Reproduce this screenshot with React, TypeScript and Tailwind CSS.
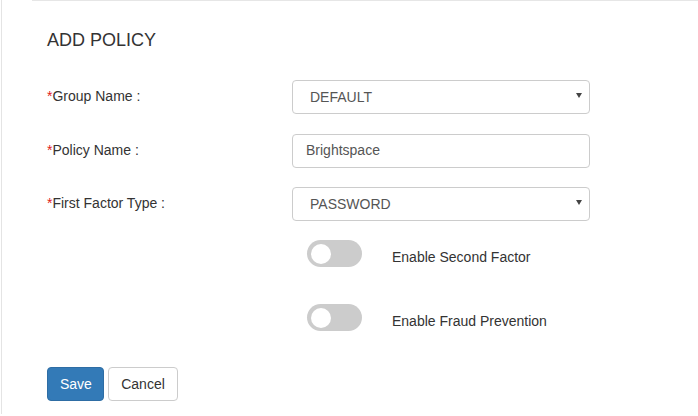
import { useState } from 'react';

function Toggle({ label }: { label: string }) {
  const [on, setOn] = useState(false);
  return (
    <div className="flex items-center h-[27px]">
      <div className="w-[260px] shrink-0" />
      <button
        onClick={() => setOn(!on)}
        className={`relative w-[55px] h-[27px] rounded-full ${on ? 'bg-[#337ab7]' : 'bg-[#ccc]'}`}
      >
        <span
          className={`absolute top-[3.5px] w-[20px] h-[20px] rounded-full bg-white ${on ? 'left-[31px]' : 'left-[4px]'}`}
        />
      </button>
      <span className="ml-[30px] mt-[7px] text-[14px] text-[#333]">{label}</span>
    </div>
  );
}

function Field({ label, children }: { label: string; children: React.ReactNode }) {
  return (
    <div className="flex items-center h-[34px]">
      <label className="w-[245px] shrink-0 text-[14px] text-[#333] -mt-[1px]">
        <span className="text-[#e02020]">*</span>
        {label}
      </label>
      <div className="w-[298px]">{children}</div>
    </div>
  );
}

function Select({ value }: { value: string }) {
  return (
    <div className="relative h-[34px] border border-[#ccc] rounded-[4px] bg-white flex items-center pl-[17px]">
      <span className="text-[14px] text-[#555]">{value}</span>
      <svg className="absolute right-[7px] top-[12px]" width="6" height="5" viewBox="0 0 6 5">
        <path d="M0 0H6L3 5Z" fill="#444" />
      </svg>
    </div>
  );
}

export default function App() {
  return (
    <div
      className="w-[698px] h-[416px] bg-white overflow-hidden"
      style={{ fontFamily: '"Liberation Sans", Arial, sans-serif' }}
    >
      <div className="flex h-full">
        <div className="w-px shrink-0" />
        <div className="w-px shrink-0 bg-[#e4e4e4] mb-[2px]" />
        <div className="flex-1 flex flex-col">
          <div className="ml-[30px] h-px bg-[#e6e6e6]" />
          <div className="pl-[45px]">
            <h2 className="mt-[29px] text-[18px] leading-[20px] text-[#333]">ADD POLICY</h2>
            <div className="mt-[30px] flex flex-col gap-[19.5px]">
              <Field label="Group Name :">
                <Select value="DEFAULT" />
              </Field>
              <Field label="Policy Name :">
                <div className="h-[34px] border border-[#ccc] rounded-[4px] bg-white flex items-center pl-[13px]">
                  <span className="text-[14px] text-[#555]">Brightspace</span>
                </div>
              </Field>
              <Field label="First Factor Type :">
                <Select value="PASSWORD" />
              </Field>
            </div>
            <div className="mt-[19px] flex flex-col gap-[37px]">
              <Toggle label="Enable Second Factor" />
              <Toggle label="Enable Fraud Prevention" />
            </div>
            <div className="mt-[36px] flex gap-[4px]">
              <button className="h-[34px] px-[12px] w-[57px] rounded-[4px] bg-[#337ab7] border border-[#2e6da4] text-white text-[14px]">
                Save
              </button>
              <button className="h-[34px] w-[70px] rounded-[4px] bg-white border border-[#ccc] text-[#333] text-[14px]">
                Cancel
              </button>
            </div>
          </div>
        </div>
      </div>
    </div>
  );
}
